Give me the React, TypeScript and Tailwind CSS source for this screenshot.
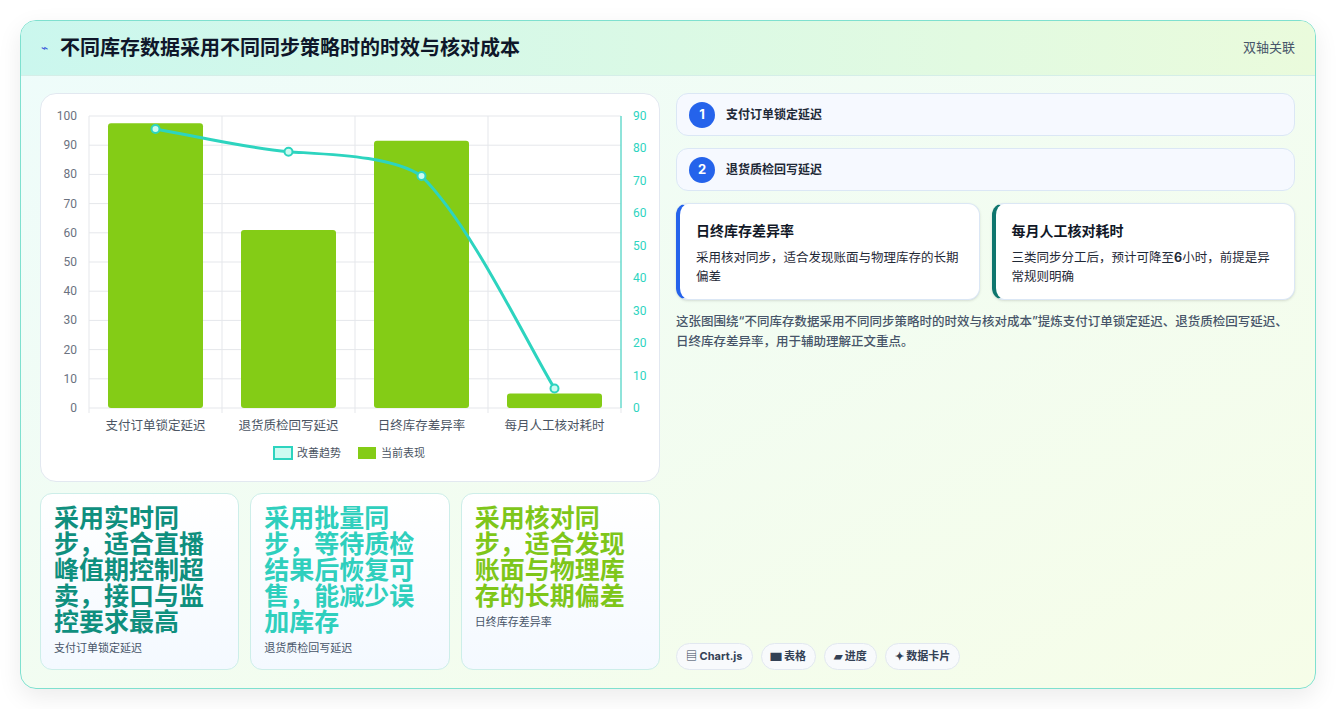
const bars = [
  { label: '支付订单锁定延迟', v: 97.5, line: 86 },
  { label: '退货质检回写延迟', v: 61, line: 79 },
  { label: '日终库存差异率', v: 91.5, line: 71.5 },
  { label: '每月人工核对耗时', v: 5, line: 6 },
];

const tiles = [
  { big: '采用实时同步，适合直播峰值期控制超卖，接口与监控要求最高', small: '支付订单锁定延迟', color: 'text-[#0f8f7e]' },
  { big: '采用批量同步，等待质检结果后恢复可售，能减少误加库存', small: '退货质检回写延迟', color: 'text-[#2fcfbd]' },
  { big: '采用核对同步，适合发现账面与物理库存的长期偏差', small: '日终库存差异率', color: 'text-[#7ec61a]' },
];

function Chart() {
  const L = 48, R = 580, T = 22, B = 314;
  const cw = (R - L) / 4;
  const yl = (v: number) => B - (v / 100) * (B - T);
  const yr = (v: number) => B - (v / 90) * (B - T);
  const pts = bars.map((b, i) => [L + cw * i + cw / 2, yr(b.line)]);
  const [p0, p1, p2, p3] = pts;
  const d = `M${p0[0]} ${p0[1]} C${p0[0] + 45} ${p0[1] + 8}, ${p1[0] - 45} ${p1[1] - 4}, ${p1[0]} ${p1[1]} C${p1[0] + 45} ${p1[1] + 3}, ${p2[0] - 30} ${p2[1] - 20}, ${p2[0]} ${p2[1]} C${p2[0] + 50} ${p2[1] + 50}, ${p3[0] - 30} ${p3[1] - 50}, ${p3[0]} ${p3[1]}`;
  return (
    <svg width="620" height="388" className="block" style={{ fontFamily: 'Roboto, "Liberation Sans", sans-serif' }}>
      {Array.from({ length: 11 }, (_, i) => i * 10).map((v) => (
        <g key={v}>
          <line x1={L} x2={R} y1={yl(v)} y2={yl(v)} stroke="#e5e7eb" />
          <text x={L - 12} y={yl(v) + 4} textAnchor="end" fontSize="12" fill="#6b7280">{v}</text>
        </g>
      ))}
      {Array.from({ length: 10 }, (_, i) => i * 10).map((v) => (
        <text key={v} x={R + 12} y={yr(v) + 4} fontSize="12" fill="#2dd4bf">{v}</text>
      ))}
      {[0, 1, 2, 3, 4].map((i) => (
        <line key={i} x1={L + cw * i} x2={L + cw * i} y1={T} y2={B + 5} stroke="#e5e7eb" />
      ))}
      <line x1={R} x2={R} y1={T} y2={B} stroke="#2dd4bf" />
      {bars.map((b, i) => (
        <rect key={i} x={L + cw * i + 19} y={yl(b.v)} width={95} height={B - yl(b.v)} rx="3" fill="#84cc16" />
      ))}
      <path d={d} fill="none" stroke="#2dd4bf" strokeWidth="3" />
      {pts.map(([x, y], i) => (
        <circle key={i} cx={x} cy={y} r="4" fill="#ccfbf1" stroke="#2dd4bf" strokeWidth="2" />
      ))}
      {bars.map((b, i) => (
        <text key={i} x={L + cw * i + cw / 2} y={336} textAnchor="middle" fontSize="12.5" fill="#4b5563" fontFamily='"Noto Sans CJK SC", sans-serif'>{b.label}</text>
      ))}
      <rect x={233} y={353} width={18} height={12} fill="#ccfbf1" stroke="#2dd4bf" strokeWidth="2" />
      <text x={256} y={363} fontSize="11" fill="#4b5563" fontFamily='"Noto Sans CJK SC", sans-serif'>改善趋势</text>
      <rect x={317} y={353} width={18} height={12} fill="#84cc16" />
      <text x={340} y={363} fontSize="11" fill="#4b5563" fontFamily='"Noto Sans CJK SC", sans-serif'>当前表现</text>
    </svg>
  );
}

export default function App() {
  return (
    <div className="min-h-screen bg-white p-5 pb-5" style={{ fontFamily: 'Inter, "Noto Sans CJK SC", sans-serif' }}>
      <div className="h-[669px] rounded-2xl border border-[#7fe0cf] bg-gradient-to-br from-[#eefcfb] to-[#f6fde8] shadow-[0_8px_24px_rgba(0,0,0,0.08)] overflow-hidden flex flex-col">
        <div className="h-[55px] flex items-center justify-between px-5 bg-gradient-to-r from-[#cbf7ee] to-[#eafbdc] border-b border-[#d5eee8]">
          <div className="flex items-center gap-3">
            <span className="text-[#3b5bdb] text-xs">⌁</span>
            <h1 className="text-[20px] font-bold text-[#0f172a]">不同库存数据采用不同同步策略时的时效与核对成本</h1>
          </div>
          <span className="text-[13px] text-[#475569]">双轴关联</span>
        </div>
        <div className="flex-1 flex gap-4 pl-[19px] pr-5 pt-[17px] pb-[18px]">
          <div className="w-[620px] flex flex-col gap-[11px]">
            <div className="h-[389px] bg-white rounded-2xl border border-[#e2e8f0]">
              <Chart />
            </div>
            <div className="flex-1 grid grid-cols-3 gap-[11px]">
              {tiles.map((t) => (
                <div key={t.small} className="rounded-xl border border-[#cdeee9] bg-gradient-to-b from-white to-[#f4f9ff] px-[13px] pt-[11px] pb-3 flex flex-col">
                  <div className={`text-[25px] leading-[26px] font-bold ${t.color}`}>{t.big}</div>
                  <div className="text-[11px] text-[#475569] mt-[5px]">{t.small}</div>
                </div>
              ))}
            </div>
          </div>
          <div className="flex-1 flex flex-col">
            {['支付订单锁定延迟', '退货质检回写延迟'].map((s, i) => (
              <div key={s} className="h-[43px] mb-3 rounded-xl border border-[#dbe7f5] bg-[#f6f9ff] flex items-center px-3 gap-[11px]">
                <span className="w-[26px] h-[26px] rounded-full bg-[#2563eb] text-white text-[13px] font-bold flex items-center justify-center">{i + 1}</span>
                <span className="text-[12px] font-semibold text-[#1f2937]">{s}</span>
              </div>
            ))}
            <div className="grid grid-cols-2 gap-3">
              <div className="h-[97px] rounded-xl border border-[#dbe7f5] border-l-4 border-l-[#2563eb] bg-white px-4 pt-4 shadow-sm">
                <div className="text-[14px] font-bold text-[#111827]">日终库存差异率</div>
                <div className="text-[12.5px] leading-[19px] text-[#1f2937] mt-[7px]">采用核对同步，适合发现账面与物理库存的长期偏差</div>
              </div>
              <div className="h-[97px] rounded-xl border border-[#dbe7f5] border-l-4 border-l-[#0f766e] bg-white px-4 pt-4 shadow-sm">
                <div className="text-[14px] font-bold text-[#111827]">每月人工核对耗时</div>
                <div className="text-[12.5px] leading-[19px] text-[#1f2937] mt-[7px]">三类同步分工后，预计可降至<b>6</b>小时，前提是异常规则明确</div>
              </div>
            </div>
            <p className="mt-3 text-[12.5px] leading-[20px] font-medium text-[#475569]">这张图围绕“不同库存数据采用不同同步策略时的时效与核对成本”提炼支付订单锁定延迟、退货质检回写延迟、日终库存差异率，用于辅助理解正文重点。</p>
            <div className="mt-auto flex gap-2">
              {['▤ Chart.js', '▆ 表格', '▰ 进度', '✦ 数据卡片'].map((t) => (
                <span key={t} className="h-[27px] px-[9px] rounded-full border border-[#e2e8f0] bg-[#f8fafc] text-[11px] font-bold text-[#334155] flex items-center">{t}</span>
              ))}
            </div>
          </div>
        </div>
      </div>
    </div>
  );
}
